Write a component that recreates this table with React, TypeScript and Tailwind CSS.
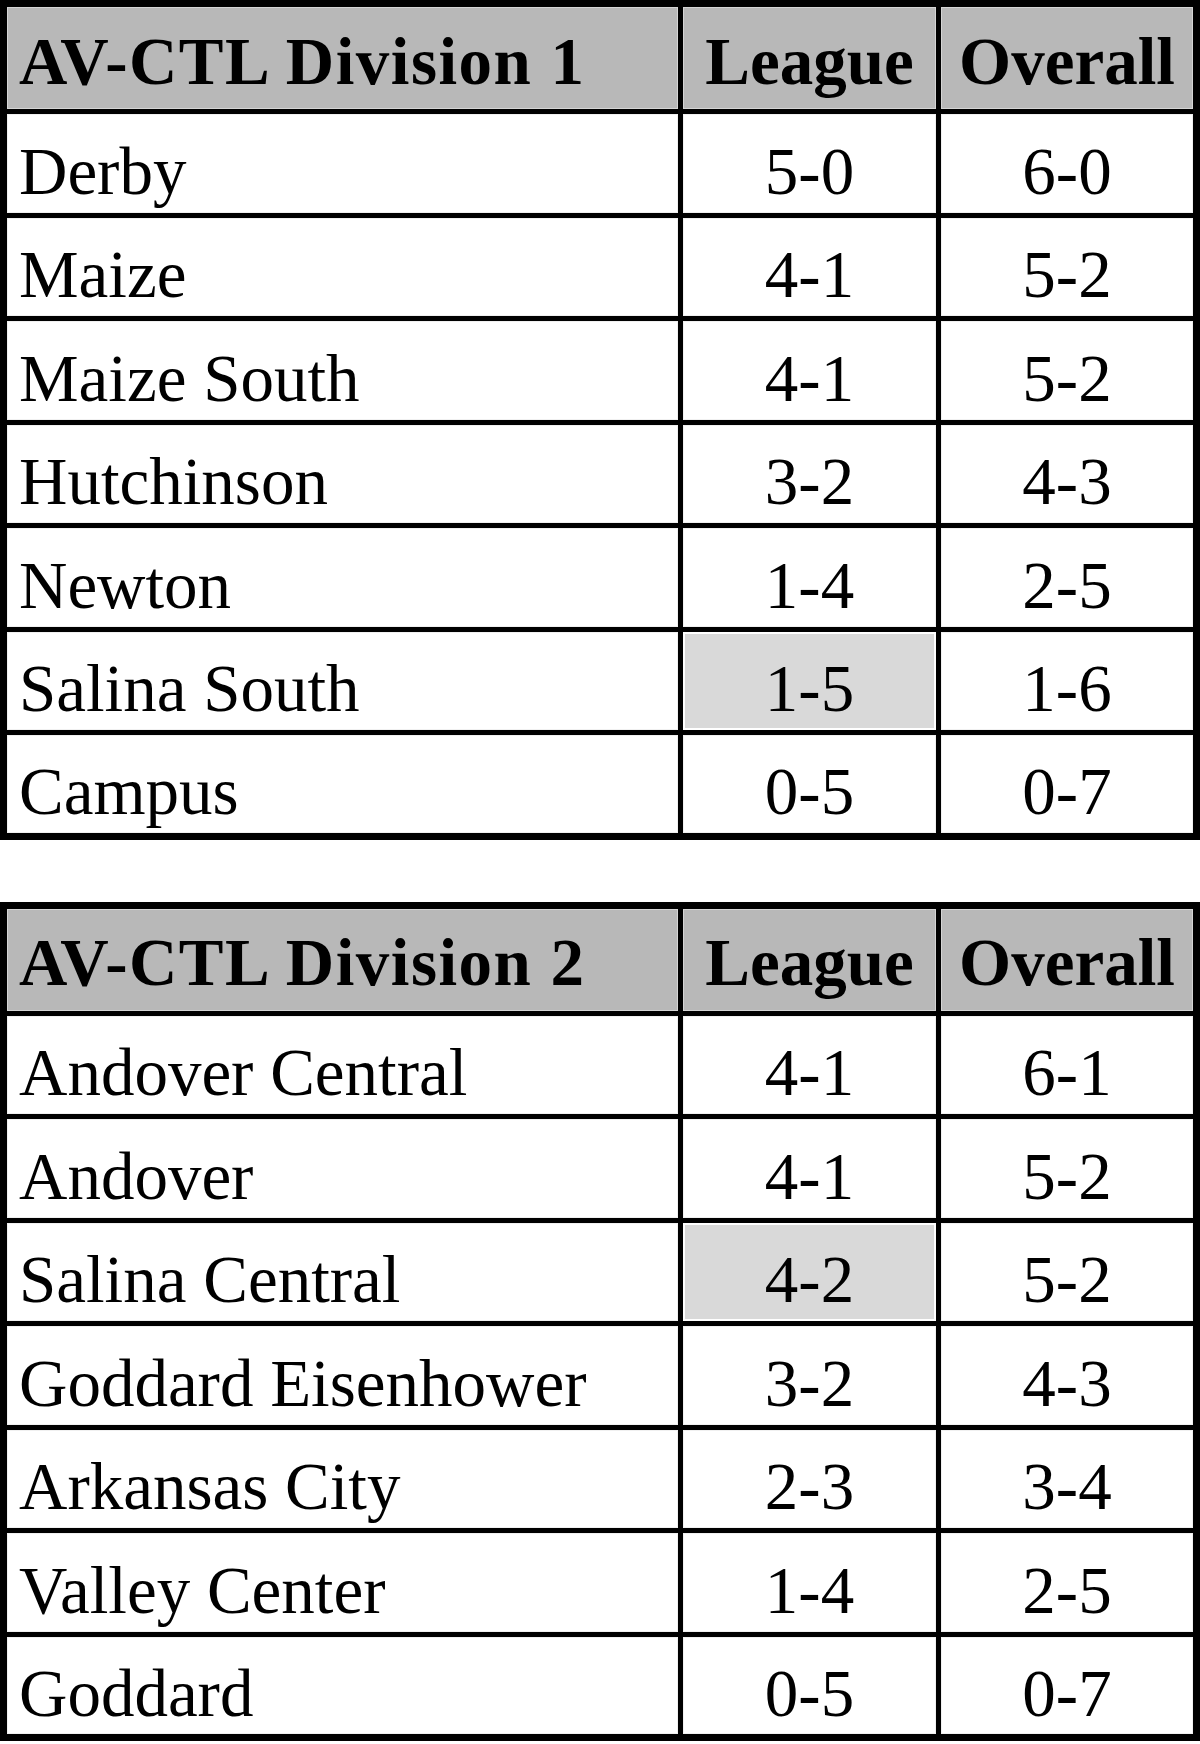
import React from "react";

interface StandingRow {
	team: string;
	league: string;
	overall: string;
	highlight?: boolean;
}

interface Division {
	title: string;
	rows: StandingRow[];
}

const divisions: Division[] = [
	{
		title: "AV-CTL Division 1",
		rows: [
			{ team: "Derby", league: "5-0", overall: "6-0" },
			{ team: "Maize", league: "4-1", overall: "5-2" },
			{ team: "Maize South", league: "4-1", overall: "5-2" },
			{ team: "Hutchinson", league: "3-2", overall: "4-3" },
			{ team: "Newton", league: "1-4", overall: "2-5" },
			{ team: "Salina South", league: "1-5", overall: "1-6", highlight: true },
			{ team: "Campus", league: "0-5", overall: "0-7" },
		],
	},
	{
		title: "AV-CTL Division 2",
		rows: [
			{ team: "Andover Central", league: "4-1", overall: "6-1" },
			{ team: "Andover", league: "4-1", overall: "5-2" },
			{ team: "Salina Central", league: "4-2", overall: "5-2", highlight: true },
			{ team: "Goddard Eisenhower", league: "3-2", overall: "4-3" },
			{ team: "Arkansas City", league: "2-3", overall: "3-4" },
			{ team: "Valley Center", league: "1-4", overall: "2-5" },
			{ team: "Goddard", league: "0-5", overall: "0-7" },
		],
	},
];

const headCell =
	"border-[5px] border-black bg-[#b8b8b8] h-[108px] p-0 pt-[6px] font-bold shadow-[inset_0_0_0_1px_#d4d4d4]";
const bodyCell =
	"border-[5px] border-black h-[103.5px] p-0 pt-[16px] shadow-[inset_0_0_0_1px_#f0f0f0]";

const StandingsTable: React.FC<{ division: Division }> = ({ division }) => (
	<table className="w-[1200px] table-fixed border-collapse border-[7px] border-black bg-white text-black">
		<colgroup>
			<col className="w-[677px]" />
			<col className="w-[258px]" />
			<col />
		</colgroup>
		<thead>
			<tr>
				<th className={`${headCell} pl-[12px] text-left tracking-[1.5px]`}>{division.title}</th>
				<th className={`${headCell} text-center`}>League</th>
				<th className={`${headCell} text-center`}>Overall</th>
			</tr>
		</thead>
		<tbody>
			{division.rows.map((row) => (
				<tr key={row.team}>
					<td className={`${bodyCell} pl-[12px] text-left`}>{row.team}</td>
					<td
						className={`${bodyCell} text-center ${
							row.highlight ? "bg-[#d9d9d9] shadow-[inset_0_0_0_2px_#ffffff]" : ""
						}`}
					>
						{row.league}
					</td>
					<td className={`${bodyCell} text-center`}>{row.overall}</td>
				</tr>
			))}
		</tbody>
	</table>
);

export default function App() {
	return (
		<div className="w-[1200px] min-h-[1744px] bg-white font-['Liberation_Serif','Times_New_Roman',serif] text-[67px] leading-none">
			<div className="flex flex-col gap-[62px]">
				{divisions.map((division) => (
					<StandingsTable key={division.title} division={division} />
				))}
			</div>
		</div>
	);
}
